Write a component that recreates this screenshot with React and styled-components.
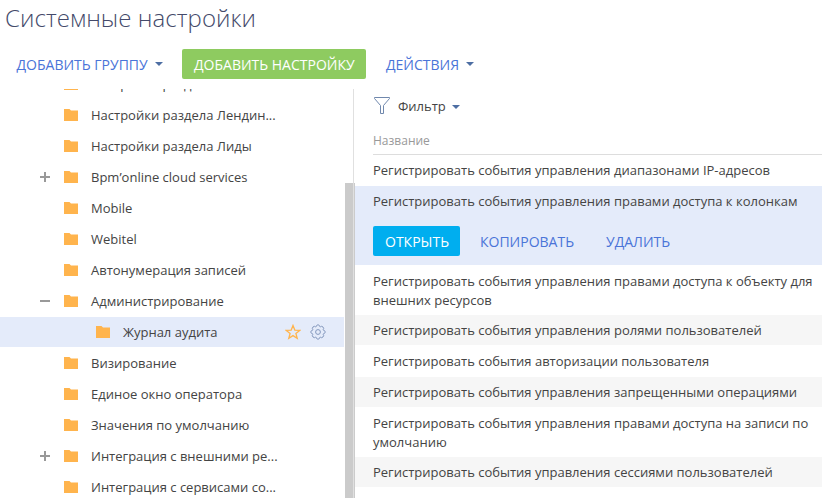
import React from "react";
import styled, { createGlobalStyle } from "styled-components";

const GlobalStyle = createGlobalStyle`
  * { box-sizing: border-box; }
  body { margin: 0; background: #fff; overflow: hidden; }
`;

const Page = styled.div`
  width: 822px;
  height: 498px;
  display: flex;
  flex-direction: column;
  overflow: hidden;
  color: #444;
  font: 13px/19px "Open Sans", sans-serif;
`;

const Title = styled.h1`
  margin: 0;
  padding-left: 5px;
  height: 49px;
  font-size: 24px;
  font-weight: 300;
  line-height: 35px;
  letter-spacing: 0.06px;
  color: #444a6a;
`;

const Toolbar = styled.div`
  height: 40px;
  display: flex;
  align-items: flex-start;
  padding-left: 4px;
  flex: none;
`;

const tones = {
  link: "background: transparent; color: #4a74d8;",
  green: "background: #8ecb60; color: #fff;",
  blue: "background: #00aeef; color: #fff;",
};

const Button = styled.button`
  border: 0;
  border-radius: 2px;
  height: 30px;
  width: ${(p) => p.$width}px;
  padding: 2px 0 0 ${(p) => p.$inset || 12}px;
  display: flex;
  align-items: center;
  gap: 7px;
  flex: none;
  white-space: nowrap;
  font: 14px/20px "Open Sans", sans-serif;
  ${(p) => tones[p.$tone || "link"]}
`;

const Caret = styled.svg`
  width: 8px;
  height: 4px;
  flex: none;
  margin-top: -2px;
  fill: #4d6ea3;
`;

const Body = styled.div`
  flex: 1;
  display: flex;
  min-height: 0;
`;

const TreePane = styled.div`
  width: 355px;
  flex: none;
  display: flex;
  overflow: hidden;
`;

const Tree = styled.div`
  width: 344px;
  margin: -20px 1px 0 0;
  flex: none;
`;

const Node = styled.div`
  height: 30px;
  margin-bottom: 1px;
  display: flex;
  align-items: center;
  padding-left: ${(p) => (p.$nested ? 72 : 40)}px;
  background: ${(p) => (p.$nested ? "#e4ebfa" : "transparent")};
`;

const Toggle = styled.svg`
  width: 10px;
  height: 10px;
  margin-right: 14px;
  flex: none;
  fill: #999;
`;

const Folder = styled.svg`
  width: 14px;
  height: 12px;
  flex: none;
  fill: #ffb44d;
`;

const NodeLabel = styled.span`
  margin-left: 13px;
  flex: 1;
  white-space: nowrap;
`;

const Tools = styled.span`
  display: flex;
  gap: 9.5px;
  align-items: center;
  padding-right: 18px;
`;

const ToolIcon = styled.svg`
  width: 16px;
  height: 16px;
  fill: none;
  stroke: ${(p) => p.$color};
  stroke-width: ${(p) => p.$weight || 1};
`;

const ScrollTrack = styled.div`
  width: 10px;
  padding-top: 94px;
  display: flex;
  background: linear-gradient(#e0e0e0, #e0e0e0) 8px 0 / 1px 100% no-repeat;
`;

const ScrollThumb = styled.div`
  flex: 1;
  background: linear-gradient(#e0e0e0, #e0e0e0) 8px 0 / 1px 100% no-repeat #cbcbcb;
`;

const Main = styled.main`
  flex: 1;
  min-width: 0;
`;

const FilterBar = styled.div`
  height: 43px;
  padding: 8px 0 0 19px;
  display: flex;
  align-items: flex-start;
`;

const Funnel = styled.svg`
  width: 16px;
  height: 17px;
  fill: none;
  stroke: #7088ad;
  margin-right: 8px;
`;

const FilterLabel = styled.span`
  display: flex;
  align-items: center;
  gap: 6px;
  & > svg { margin-top: 1px; }
`;

const ColumnHeader = styled.div`
  height: 23px;
  margin-left: 18px;
  border-bottom: 1px solid #ddd;
  color: #999;
  font-size: 12px;
  line-height: 18px;
`;

const Row = styled.div`
  height: ${(p) => p.$height}px;
  margin-bottom: 1px;
  padding: 6px 0 0 18px;
  white-space: pre-line;
  background: ${(p) => p.$fill || "transparent"};
`;

const RowActions = styled.div`
  display: flex;
  margin-top: 15px;
`;

const Down = () => (
  <Caret viewBox="0 0 8 4"><path d="M0 0h8L4 4z" /></Caret>
);

const nodes = [
  ["Настройки раздела"],
  ["Настройки раздела Лендин..."],
  ["Настройки раздела Лиды"],
  ["Bpm’online cloud services", "plus"],
  ["Mobile"],
  ["Webitel"],
  ["Автонумерация записей"],
  ["Администрирование", "minus"],
  ["Журнал аудита", null, true],
  ["Визирование"],
  ["Единое окно оператора"],
  ["Значения по умолчанию"],
  ["Интеграция с внешними ре...", "plus"],
  ["Интеграция с сервисами со..."],
];

const TreeNode = ({ label, toggle, nested }) => (
  <Node $nested={nested}>
    <Toggle viewBox="0 0 10 10">
      {toggle && <path d="M0 4h10v2H0z" />}
      {toggle === "plus" && <path d="M4 0h2v10H4z" />}
    </Toggle>
    <Folder viewBox="0 0 14 12"><path d="M0 0h5.500L7 1.500h7V12H0z" /></Folder>
    <NodeLabel>{label}</NodeLabel>
    {nested && (
      <Tools>
        <ToolIcon viewBox="0 0 16 16" $color="#ffb44d" $weight={1.3}>
          <path d="M8 1.5 9.8 6.1l4.9.3-3.8 3.1 1.3 4.8L8 11.6l-4.2 2.7 1.3-4.8L1.3 6.4l4.9-.3z" />
        </ToolIcon>
        <ToolIcon viewBox="0 0 16 16" $color="#8498bd">
          <circle cx="8" cy="8" r="2.4" />
          <path d="M6.6 1.5q1.4-1.6 2.8 0l.3 1 .7.3 1-.5q2 .1 2.3 2.3l-.5 1 .3.7 1 .3q1.6 1.4 0 2.8l-1 .3-.3.7.5 1q-.3 2.1-2.3 2.3l-1-.5-.7.3-.3 1q-1.4 1.6-2.8 0l-.3-1-.7-.3-1 .5q-2.1-.2-2.3-2.3l.5-1-.3-.7-1-.3q-1.6-1.4 0-2.8l1-.3.3-.7-.5-1q.2-2.2 2.300-2.300l1 .5.7-.3z" />
        </ToolIcon>
      </Tools>
    )}
  </Node>
);

export default function App() {
  return (
    <Page>
      <GlobalStyle />
      <Title>Системные настройки</Title>
      <Toolbar>
        <Button $width={178} $inset={12.5}>ДОБАВИТЬ ГРУППУ <Down /></Button>
        <Button $width={184} $tone="green">ДОБАВИТЬ НАСТРОЙКУ</Button>
        <Button $width={120} $inset={20}>ДЕЙСТВИЯ <Down /></Button>
      </Toolbar>
      <Body>
        <TreePane>
          <Tree>
            {nodes.map(([label, toggle, nested]) => (
              <TreeNode key={label} label={label} toggle={toggle} nested={nested} />
            ))}
          </Tree>
          <ScrollTrack><ScrollThumb /></ScrollTrack>
        </TreePane>
        <Main>
          <FilterBar>
            <Funnel viewBox="0 0 16 17"><path d="M.5.5h15v1l-6 7v8h-3v-8l-6-7z" /></Funnel>
            <FilterLabel>Фильтр <Down /></FilterLabel>
          </FilterBar>
          <ColumnHeader>Название</ColumnHeader>
          <Row $height={30}>Регистрировать события управления диапазонами IP-адресов</Row>
          <Row $height={79} $fill="#e4ebfa">
            Регистрировать события управления правами доступа к колонкам
            <RowActions>
              <Button $width={87} $tone="blue">ОТКРЫТЬ</Button>
              <Button $width={126} $inset={20}>КОПИРОВАТЬ</Button>
              <Button $width={100} $inset={20}>УДАЛИТЬ</Button>
            </RowActions>
          </Row>
          <Row $height={48}>{"Регистрировать события управления правами доступа к объекту для\nвнешних ресурсов"}</Row>
          <Row $height={30} $fill="#f6f6f6">Регистрировать события управления ролями пользователей</Row>
          <Row $height={30}>Регистрировать события авторизации пользователя</Row>
          <Row $height={30} $fill="#f6f6f6">Регистрировать события управления запрещенными операциями</Row>
          <Row $height={48}>{"Регистрировать события управления правами доступа на записи по\nумолчанию"}</Row>
          <Row $height={30} $fill="#f6f6f6">Регистрировать события управления сессиями пользователей</Row>
        </Main>
      </Body>
    </Page>
  );
}
